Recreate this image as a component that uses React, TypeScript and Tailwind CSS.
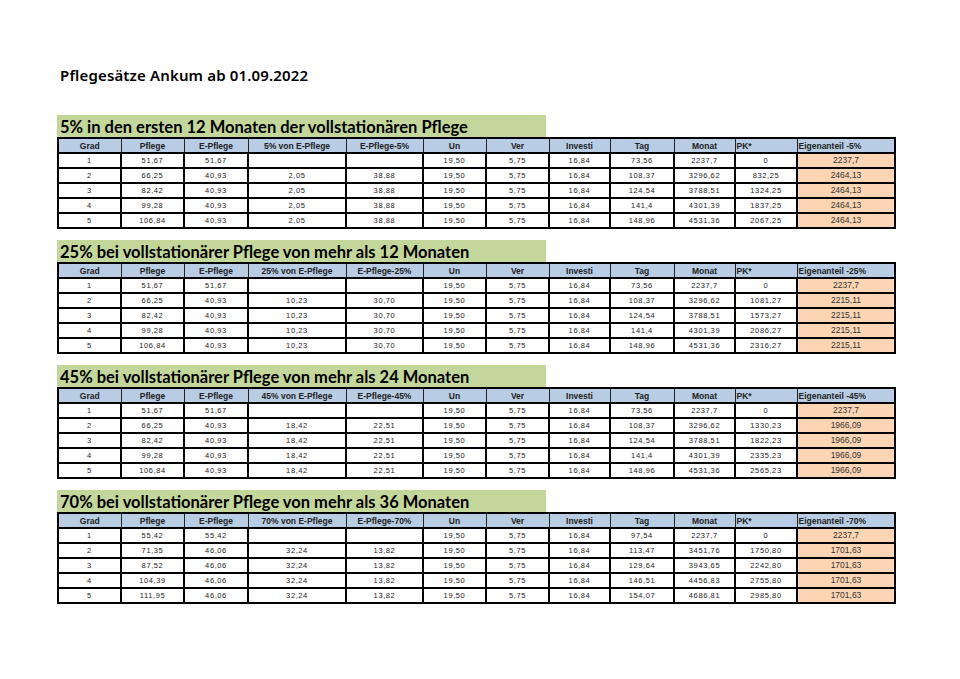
import React from 'react';

type Row = string[];

interface Section {
  title: string;
  pct: string;
  rows: Row[];
}

const widths = [63, 63, 64, 98, 77, 63, 63, 61, 64, 61, 62, 98];

const sections: Section[] = [
  {
    title: '5% in den ersten 12 Monaten der vollstationären Pflege',
    pct: '5%',
    rows: [
      ['1', '51,67', '51,67', '', '', '19,50', '5,75', '16,84', '73,56', '2237,7', '0', '2237,7'],
      ['2', '66,25', '40,93', '2,05', '38,88', '19,50', '5,75', '16,84', '108,37', '3296,62', '832,25', '2464,13'],
      ['3', '82,42', '40,93', '2,05', '38,88', '19,50', '5,75', '16,84', '124,54', '3788,51', '1324,25', '2464,13'],
      ['4', '99,28', '40,93', '2,05', '38,88', '19,50', '5,75', '16,84', '141,4', '4301,39', '1837,25', '2464,13'],
      ['5', '106,84', '40,93', '2,05', '38,88', '19,50', '5,75', '16,84', '148,96', '4531,36', '2067,25', '2464,13'],
    ],
  },
  {
    title: '25% bei vollstationärer Pflege von mehr als 12 Monaten',
    pct: '25%',
    rows: [
      ['1', '51,67', '51,67', '', '', '19,50', '5,75', '16,84', '73,56', '2237,7', '0', '2237,7'],
      ['2', '66,25', '40,93', '10,23', '30,70', '19,50', '5,75', '16,84', '108,37', '3296,62', '1081,27', '2215,11'],
      ['3', '82,42', '40,93', '10,23', '30,70', '19,50', '5,75', '16,84', '124,54', '3788,51', '1573,27', '2215,11'],
      ['4', '99,28', '40,93', '10,23', '30,70', '19,50', '5,75', '16,84', '141,4', '4301,39', '2086,27', '2215,11'],
      ['5', '106,84', '40,93', '10,23', '30,70', '19,50', '5,75', '16,84', '148,96', '4531,36', '2316,27', '2215,11'],
    ],
  },
  {
    title: '45% bei vollstationärer Pflege von mehr als 24 Monaten',
    pct: '45%',
    rows: [
      ['1', '51,67', '51,67', '', '', '19,50', '5,75', '16,84', '73,56', '2237,7', '0', '2237,7'],
      ['2', '66,25', '40,93', '18,42', '22,51', '19,50', '5,75', '16,84', '108,37', '3296,62', '1330,23', '1966,09'],
      ['3', '82,42', '40,93', '18,42', '22,51', '19,50', '5,75', '16,84', '124,54', '3788,51', '1822,23', '1966,09'],
      ['4', '99,28', '40,93', '18,42', '22,51', '19,50', '5,75', '16,84', '141,4', '4301,39', '2335,23', '1966,09'],
      ['5', '106,84', '40,93', '18,42', '22,51', '19,50', '5,75', '16,84', '148,96', '4531,36', '2565,23', '1966,09'],
    ],
  },
  {
    title: '70% bei vollstationärer Pflege von mehr als 36 Monaten',
    pct: '70%',
    rows: [
      ['1', '55,42', '55,42', '', '', '19,50', '5,75', '16,84', '97,54', '2237,7', '0', '2237,7'],
      ['2', '71,35', '46,06', '32,24', '13,82', '19,50', '5,75', '16,84', '113,47', '3451,76', '1750,80', '1701,63'],
      ['3', '87,52', '46,06', '32,24', '13,82', '19,50', '5,75', '16,84', '129,64', '3943,65', '2242,80', '1701,63'],
      ['4', '104,39', '46,06', '32,24', '13,82', '19,50', '5,75', '16,84', '146,51', '4456,83', '2755,80', '1701,63'],
      ['5', '111,95', '46,06', '32,24', '13,82', '19,50', '5,75', '16,84', '154,07', '4686,81', '2985,80', '1701,63'],
    ],
  },
];

const RateTable: React.FC<{ section: Section }> = ({ section }) => {
  const headers = [
    'Grad',
    'Pflege',
    'E-Pflege',
    `${section.pct} von E-Pflege`,
    `E-Pflege-${section.pct}`,
    'Un',
    'Ver',
    'Investi',
    'Tag',
    'Monat',
    'PK*',
    `Eigenanteil -${section.pct}`,
  ];

  return (
    <div className="flex flex-col">
      {/* Section title band */}
      <div className="w-[489px] h-[22px] bg-[#c4d79b] pl-[3px] flex items-end">
        <span
          className="text-[16.5px] leading-[20px] font-bold text-black"
          style={{ fontFamily: 'Lato, "Open Sans", sans-serif' }}
        >
          {section.title}
        </span>
      </div>

      <table
        className="table-fixed border-collapse border-2 border-black w-[837px]"
        style={{ fontFamily: '"Liberation Sans", Arial, sans-serif' }}
      >
        <colgroup>
          {widths.map((w, i) => (
            <col key={i} style={{ width: w }} />
          ))}
        </colgroup>
        <thead>
          <tr className="h-[15px]">
            {headers.map((h, i) => (
              <th
                key={i}
                className={`bg-[#b8cce4] border-[1.5px] border-[#222] p-0 text-[8.5px] leading-[12px] font-bold text-[#222] whitespace-nowrap ${
                  i >= 10 ? 'text-left pl-[1px]' : 'text-center'
                }`}
              >
                {h}
              </th>
            ))}
          </tr>
        </thead>
        <tbody>
          {section.rows.map((row, r) => (
            <tr key={r} className="h-[15px]">
              {row.map((cell, c) =>
                c === 11 ? (
                  <td
                    key={c}
                    className="bg-[#fcd5b4] border-2 border-black p-0 text-center text-[8.5px] leading-[11px] text-[#333] font-medium"
                  >
                    {cell}
                  </td>
                ) : (
                  <td
                    key={c}
                    className="bg-white border-2 border-black p-0 text-center text-[7.5px] leading-[11px] text-[#222] tracking-[0.6px]"
                  >
                    {cell}
                  </td>
                )
              )}
            </tr>
          ))}
        </tbody>
      </table>
    </div>
  );
}

export default function App() {
  return (
    <div className="w-[960px] h-[679px] bg-white overflow-hidden">
      <div className="pl-[57px] pt-[64px] flex flex-col">
        <h1
          className="pl-[3px] text-[15px] leading-[22px] font-semibold text-black tracking-[0.15px]"
          style={{ fontFamily: '"Noto Sans", "Open Sans", sans-serif' }}
        >
          Pflegesätze Ankum ab 01.09.2022
        </h1>
        <div className="mt-[29px] flex flex-col gap-[11px]">
          {sections.map((s, i) => (
            <RateTable key={i} section={s} />
          ))}
        </div>
      </div>
    </div>
  );
}
